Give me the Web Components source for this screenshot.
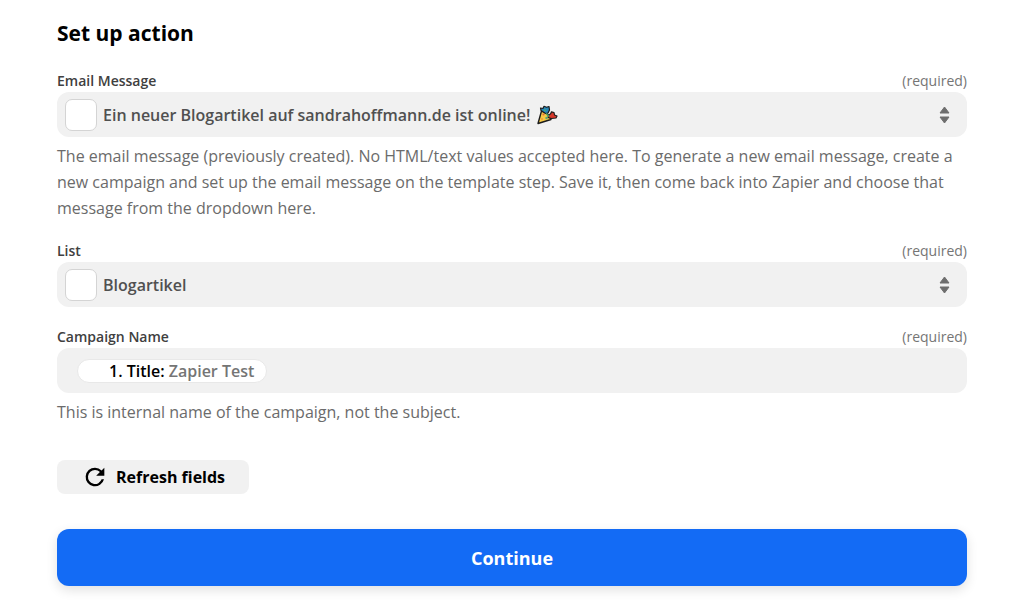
<!DOCTYPE html>
<html lang="en">
<head>
<meta charset="utf-8">
<meta name="viewport" content="width=device-width, initial-scale=1">
<title>Set up action</title>
<style>
    body {
        margin: 0;
        background: #fff;
        color: #6b6b6b;
        font: 16px/26px "Open Sans", sans-serif;
    }
</style>
</head>
<body>

<action-setup>
    <span slot="title">Set up action</span>

    <select-field label="Email Message" value="Ein neuer Blogartikel auf sandrahoffmann.de ist online!">
        <party-icon slot="suffix"></party-icon>
        <span slot="help">The email message (previously created). No HTML/text values accepted here. To generate a new email message, create a new campaign and set up the email message on the template step. Save it, then come back into Zapier and choose that message from the dropdown here.</span>
    </select-field>

    <select-field label="List" value="Blogartikel"></select-field>

    <token-field label="Campaign Name">
        <value-token slot="token" name="1. Title:">Zapier Test</value-token>
        <span slot="help">This is internal name of the campaign, not the subject.</span>
    </token-field>

    <refresh-button slot="actions">Refresh fields</refresh-button>
    <continue-button slot="actions">Continue</continue-button>
</action-setup>

<script>
// Shared by both kinds of field
const FIELD_STYLE = `
    :host {
        display: block;
    }

    .head {
        display: flex;
        justify-content: space-between;
        margin-bottom: 2px;
        font-size: 14px;
        line-height: 18px;
    }

    .head label {
        color: #404040;
        font-weight: 600;
    }

    .head span {
        color: #757575;
    }

    .frame {
        display: flex;
        align-items: center;
        box-sizing: border-box;
        height: 45px;
        border-radius: 12px;
        background: #f1f1f1;
    }

    slot[name="help"]::slotted(*) {
        display: block;
        margin-top: 6px;
    }
`;

class ActionSetup extends HTMLElement
{
    constructor()
    {
        super();
        this.attachShadow({mode: 'open'});
    }

    connectedCallback()
    {
        this.shadowRoot.innerHTML = `
        <style>
            :host {
                display: block;
                padding: 20px 57px 24px;
            }

            h1 {
                margin: 0 0 26px;
                color: #000;
                font-size: 21px;
                line-height: 26px;
                font-weight: 700;
            }

            .fields {
                display: flex;
                flex-direction: column;
                gap: 21px;
            }

            .actions {
                display: flex;
                flex-direction: column;
                align-items: flex-start;
                gap: 35px;
                margin-top: 35px;
            }
        </style>

        <h1><slot name="title"></slot></h1>
        <div class="fields"><slot></slot></div>
        <div class="actions"><slot name="actions"></slot></div>
        `;
    }
}

class SelectField extends HTMLElement
{
    constructor()
    {
        super();
        this.attachShadow({mode: 'open'});
    }

    connectedCallback()
    {
        this.shadowRoot.innerHTML = `
        <style>
            ${FIELD_STYLE}

            .frame {
                padding: 0 17px 0 8px;
            }

            .thumb {
                flex: none;
                box-sizing: border-box;
                width: 32px;
                height: 32px;
                margin-right: 6px;
                border: 1px solid #d4d4d4;
                border-radius: 7px;
                background: #fff;
            }

            select {
                appearance: none;
                field-sizing: content;
                min-width: 0;
                padding: 0;
                border: 0;
                background: none;
                color: #505050;
                font: inherit;
                font-weight: 600;
            }

            .arrows {
                flex: none;
                margin-left: auto;
            }
        </style>

        <div class="head">
            <label for="control">${this.getAttribute('label')}</label>
            <span>(required)</span>
        </div>
        <div class="frame">
            <div class="thumb"></div>
            <select id="control" required>
                <option>${this.getAttribute('value')}</option>
            </select>
            <slot name="suffix"></slot>
            <svg class="arrows" width="11" height="18" viewBox="0 0 11 18" fill="#6e6e6e" stroke="#6e6e6e" stroke-linejoin="round" aria-hidden="true">
                <path d="M5.500 1 L10 7 H1 Z"/>
                <path d="M5.500 17 L10 11 H1 Z"/>
            </svg>
        </div>
        <slot name="help"></slot>
        `;
    }
}

class TokenField extends HTMLElement
{
    constructor()
    {
        super();
        this.attachShadow({mode: 'open'});
    }

    connectedCallback()
    {
        this.shadowRoot.innerHTML = `
        <style>
            ${FIELD_STYLE}

            .frame {
                gap: 8px;
                padding: 0 20px;
            }

            input {
                flex: 1;
                min-width: 0;
                padding: 0;
                border: 0;
                outline: 0;
                background: none;
                color: #505050;
                font: inherit;
            }
        </style>

        <div class="head">
            <label for="control">${this.getAttribute('label')}</label>
            <span>(required)</span>
        </div>
        <div class="frame">
            <slot name="token"></slot>
            <input id="control" type="text" required>
        </div>
        <slot name="help"></slot>
        `;
    }
}

class ValueToken extends HTMLElement
{
    constructor()
    {
        super();
        this.attachShadow({mode: 'open'});
    }

    connectedCallback()
    {
        this.shadowRoot.innerHTML = `
        <style>
            :host {
                display: block;
                padding: 0 12px 0 31px;
                border: 1px solid #e8e8e8;
                border-radius: 12px;
                background: #fff;
                color: #757575;
                line-height: 22px;
                font-weight: 600;
                white-space: nowrap;
            }

            b {
                color: #000;
                font-weight: 600;
            }
        </style>

        <b>${this.getAttribute('name')}</b> <slot></slot>
        `;
    }
}

class PartyIcon extends HTMLElement
{
    constructor()
    {
        super();
        this.attachShadow({mode: 'open'});
    }

    connectedCallback()
    {
        this.shadowRoot.innerHTML = `
        <style>
            :host {
                display: block;
                flex: none;
                margin-left: 7px;
            }

            svg {
                display: block;
            }
        </style>

        <svg width="21" height="20" viewBox="0 0 21 20" stroke="#1c1c1c" stroke-linejoin="round" role="img" aria-label="Party">
            <path d="M4.500 6 L1 18.500 L14 14.500 C12 10 9 7 4.500 6 Z" fill="#f6c944" stroke-width="1.400"/>
            <path d="M4 5.500 L3.500 3 L6 3.500 L7 1.300 L9.500 2.300 L12 1.500 L12.500 5 L11 8 L8.500 8.500 Z" fill="#2687b8" stroke-width="1.200"/>
            <path d="M11 12.500 L12 9.500 L13.500 9 L14.500 6.800 L17 7.500 L17.500 10 L20 11 L19 13 L14.500 13.500 Z" fill="#d8382b" stroke-width="1.200"/>
            <path d="M7 5 L9 5.500 M9 8.500 L12 11.500" stroke="#4aa66b" stroke-width="1.500"/>
            <g stroke="none">
                <circle cx="6.500" cy="9.500" r="1.100" fill="#e5693a"/>
                <circle cx="5" cy="14" r="1" fill="#f19a37"/>
                <circle cx="9.500" cy="13" r="1.200" fill="#55a878"/>
            </g>
        </svg>
        `;
    }
}

class RefreshButton extends HTMLElement
{
    constructor()
    {
        super();
        this.attachShadow({mode: 'open'});
    }

    connectedCallback()
    {
        this.shadowRoot.innerHTML = `
        <style>
            :host {
                display: block;
            }

            button {
                display: flex;
                align-items: center;
                gap: 7px;
                height: 34px;
                padding: 0 24px;
                border: 0;
                border-radius: 8px;
                background: #f1f1f1;
                color: #000;
                font: inherit;
                font-weight: 700;
                cursor: pointer;
            }
        </style>

        <button type="button">
            <svg width="28" height="28" viewBox="0 0 24 24" aria-hidden="true">
                <path d="M17.650 6.350A7.960 7.960 0 0 0 12 4a8 8 0 1 0 7.730 10h-2.080A6 6 0 1 1 12 6c1.660 0 3.140.690 4.220 1.780L13 11h7V4z"/>
            </svg>
            <slot></slot>
        </button>
        `;
    }
}

class ContinueButton extends HTMLElement
{
    constructor()
    {
        super();
        this.attachShadow({mode: 'open'});
    }

    connectedCallback()
    {
        this.shadowRoot.innerHTML = `
        <style>
            :host {
                display: block;
                align-self: stretch;
            }

            button {
                display: block;
                width: 100%;
                height: 57px;
                border: 0;
                border-radius: 12px;
                background: #136bf5;
                box-shadow: 0 4px 12px rgba(0, 0, 0, .12);
                color: #fff;
                font: inherit;
                font-size: 18px;
                font-weight: 700;
                cursor: pointer;
            }
        </style>

        <button type="button"><slot></slot></button>
        `;
    }
}

customElements.define('action-setup', ActionSetup);
customElements.define('select-field', SelectField);
customElements.define('token-field', TokenField);
customElements.define('value-token', ValueToken);
customElements.define('party-icon', PartyIcon);
customElements.define('refresh-button', RefreshButton);
customElements.define('continue-button', ContinueButton);
</script>
</body>
</html>
